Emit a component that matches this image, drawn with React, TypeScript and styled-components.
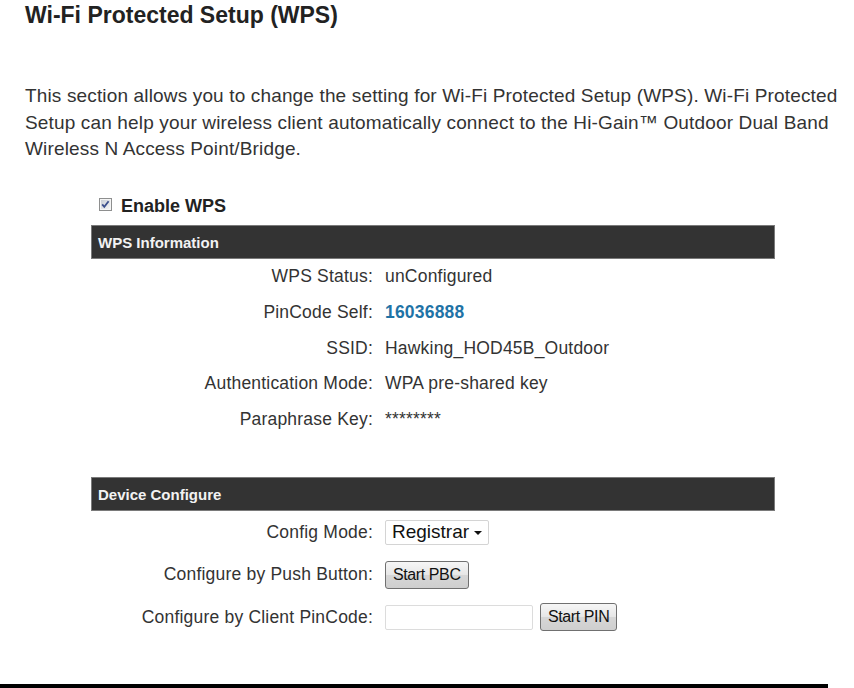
import React from "react";
import styled, { createGlobalStyle } from "styled-components";

const GlobalStyle = createGlobalStyle`
  html, body {
    margin: 0;
    padding: 0;
    background: #fff;
    overflow: hidden;
  }
  body {
    font-family: "Liberation Sans", Arial, sans-serif;
    color: #333;
  }
`;

const Page = styled.div`
  width: 828px;
  height: 688px;
  display: flex;
  flex-direction: column;
`;

const Content = styled.main`
  flex: 1;
  padding: 2px 0 0 25px;
`;

const Title = styled.h2`
  margin: 0;
  font-size: 23px;
  line-height: 26px;
  font-weight: bold;
  color: #222;
`;

const Intro = styled.p`
  margin: 55px 0 0;
  width: 825px;
  font-size: 19px;
  line-height: 26.7px;
  letter-spacing: 0.15px;
  color: #333;
`;

const Section = styled.section`
  margin: 33px 0 0 66px;
  width: 684px;
`;

const EnableRow = styled.label`
  display: flex;
  align-items: center;
  gap: 9px;
  padding-left: 8px;
  height: 20px;
  margin-bottom: 9px;
  font-size: 18px;
  font-weight: bold;
  color: #222;
`;

const CheckBox = styled.span`
  display: inline-flex;
  width: 13px;
  height: 13px;
  margin-top: -3px;
`;

const Bar = styled.div`
  box-sizing: border-box;
  height: 34px;
  padding-left: 6px;
  display: flex;
  align-items: center;
  background: #333;
  border: 1px solid #7a7a7a;
  color: #f2f2f2;
  font-size: 15px;
  font-weight: bold;
`;

const InfoGrid = styled.div`
  display: grid;
  grid-template-columns: 282px 1fr;
  column-gap: 12px;
  grid-auto-rows: 35.6px;
  align-items: center;
  font-size: 17.5px;
  letter-spacing: 0.2px;
  margin-bottom: 40px;
`;

const ConfigGrid = styled(InfoGrid)`
  grid-auto-rows: 42.5px;
  margin-bottom: 0;
`;

const Label = styled.span`
  text-align: right;
  color: #333;
`;

const Value = styled.span<{ $strong?: boolean }>`
  display: flex;
  align-items: center;
  gap: 7px;
  color: ${({ $strong }) => ($strong ? "#1f73a6" : "#333")};
  font-weight: ${({ $strong }) => ($strong ? "bold" : "normal")};
`;

const Select = styled.div`
  box-sizing: border-box;
  width: 104px;
  height: 25px;
  display: flex;
  align-items: center;
  justify-content: space-between;
  padding: 0 6px 0 6px;
  border: 1px solid #d4d4d4;
  border-radius: 2px;
  background: #fff;
  font-size: 19px;
  letter-spacing: 0;
  color: #111;
`;

const Caret = styled.span`
  width: 0;
  height: 0;
  border-left: 4px solid transparent;
  border-right: 4px solid transparent;
  border-top: 4px solid #111;
  margin-top: 2px;
`;

const Button = styled.button`
  box-sizing: border-box;
  height: 28px;
  padding: 0 7px;
  border: 1px solid #707070;
  border-radius: 3px;
  background: linear-gradient(#f6f6f6 0%, #e6e6e6 50%, #d6d6d6 51%, #cfcfcf 100%);
  font-family: "Liberation Sans", Arial, sans-serif;
  font-size: 16px;
  letter-spacing: -0.4px;
  color: #111;
`;

const PinInput = styled.input`
  box-sizing: border-box;
  width: 148px;
  height: 25px;
  border: 1px solid #dcdcdc;
  border-radius: 2px;
  outline: none;
`;

const Footer = styled.footer`
  height: 4px;
  background: #000;
`;

const Check = () => (
  <CheckBox>
    <svg width="13" height="13" viewBox="0 0 13 13">
      <defs>
        <linearGradient id="cbg" x1="0" y1="0" x2="1" y2="1">
          <stop offset="0" stopColor="#c9ced6" />
          <stop offset="1" stopColor="#f4f4f4" />
        </linearGradient>
      </defs>
      <rect x="0.5" y="0.5" width="12" height="12" fill="#f5f5f5" stroke="#8e8f8f" />
      <rect x="2" y="2" width="9" height="9" fill="url(#cbg)" />
      <path d="M3.2 6.3 L5.3 8.8 L9.6 3.2" fill="none" stroke="#3b4f8c" strokeWidth="1.8" />
    </svg>
  </CheckBox>
);

const info: { label: string; value: string; strong?: boolean }[] = [
  { label: "WPS Status:", value: "unConfigured" },
  { label: "PinCode Self:", value: "16036888", strong: true },
  { label: "SSID:", value: "Hawking_HOD45B_Outdoor" },
  { label: "Authentication Mode:", value: "WPA pre-shared key" },
  { label: "Paraphrase Key:", value: "********" },
];

export default function App() {
  return (
    <Page>
      <GlobalStyle />
      <Content>
        <Title>Wi-Fi Protected Setup (WPS)</Title>
        <Intro>
          This section allows you to change the setting for Wi-Fi Protected Setup (WPS). Wi-Fi
          Protected Setup can help your wireless client automatically connect to the Hi-Gain™
          Outdoor Dual Band Wireless N Access Point/Bridge.
        </Intro>
        <Section>
          <EnableRow>
            <Check />
            Enable WPS
          </EnableRow>
          <Bar>WPS Information</Bar>
          <InfoGrid>
            {info.map((row) => (
              <React.Fragment key={row.label}>
                <Label>{row.label}</Label>
                <Value $strong={row.strong}>{row.value}</Value>
              </React.Fragment>
            ))}
          </InfoGrid>
          <Bar>Device Configure</Bar>
          <ConfigGrid>
            <Label>Config Mode:</Label>
            <Value>
              <Select>
                Registrar
                <Caret />
              </Select>
            </Value>
            <Label>Configure by Push Button:</Label>
            <Value>
              <Button>Start PBC</Button>
            </Value>
            <Label>Configure by Client PinCode:</Label>
            <Value>
              <PinInput />
              <Button>Start PIN</Button>
            </Value>
          </ConfigGrid>
        </Section>
      </Content>
      <Footer />
    </Page>
  );
}
